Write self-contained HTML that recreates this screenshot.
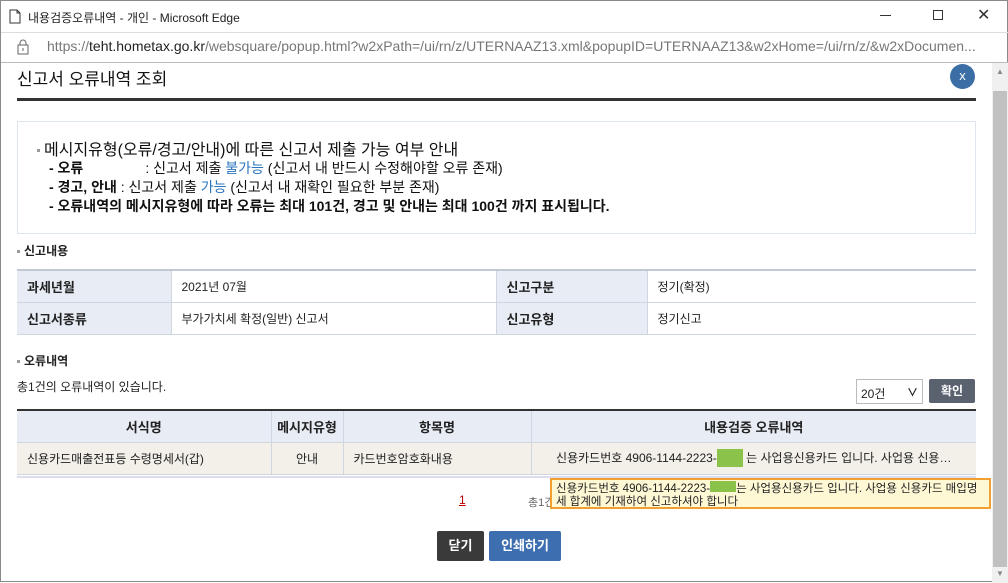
<!DOCTYPE html>
<html><head><meta charset="utf-8"><style>
*{margin:0;padding:0;box-sizing:border-box}
body{width:1008px;height:582px;overflow:hidden;background:#fff;font-family:"Liberation Sans","Noto Sans CJK KR",sans-serif;color:#222;position:relative;border:1px solid #8a8a8a}
.a{position:absolute;white-space:nowrap}
table{border-collapse:collapse;position:absolute;font-size:12px}
td,th{border:1px solid #cfd6e0;height:32px}
.th{background:#e8edf5;font-weight:bold;padding-left:10px;text-align:left;font-size:13px}
.bul{display:inline-block;width:3px;height:3px;background:#999;margin-right:4px;vertical-align:middle}
</style></head><body>
<svg class="a" style="left:8px;top:8px" width="12" height="15"><path d="M1 1h7l3 3v10H1z M8 1v3h3" fill="none" stroke="#333"/></svg>
<div class="a" style="left:27px;top:8px;font-size:12px;color:#222">내용검증오류내역 - 개인 - Microsoft Edge</div>
<div class="a" style="left:879px;top:14px;width:11px;height:1px;background:#333"></div>
<div class="a" style="left:932px;top:9px;width:10px;height:10px;border:1px solid #333"></div>
<div class="a" style="left:976px;top:4px;font-size:16px;color:#333">✕</div>
<div class="a" style="left:0;top:31px;width:1008px;height:1px;background:#ddd"></div>
<svg class="a" style="left:16px;top:38px" width="12" height="16"><rect x="1" y="6" width="10" height="9" fill="none" stroke="#666"/><path d="M3 6V4a3 3 0 0 1 6 0v2" fill="none" stroke="#666"/><rect x="5.5" y="9" width="1" height="3" fill="#666"/></svg>
<div class="a" style="left:46px;top:37px;font-size:14px;color:#777">https://<span style="color:#222">teht.hometax.go.kr</span>/websquare/popup.html?w2xPath=/ui/rn/z/UTERNAAZ13.xml&amp;popupID=UTERNAAZ13&amp;w2xHome=/ui/rn/z/&amp;w2xDocumen...</div>
<div class="a" style="left:0;top:61px;width:1008px;height:1px;background:#bbb"></div>
<div class="a" style="left:991px;top:62px;width:16px;height:520px;background:#f0f0f0"></div>
<div class="a" style="left:992px;top:90px;width:14px;height:476px;background:#c1c1c1"></div>
<div class="a" style="left:995px;top:66px;font-size:8px;color:#888">▲</div>
<div class="a" style="left:995px;top:568px;font-size:8px;color:#888">▼</div>
<div class="a" style="left:16px;top:64px;font-size:17px;color:#111">신고서 오류내역 조회</div>
<div class="a" style="left:949px;top:63px;width:25px;height:25px;border-radius:50%;background:#3a6ea5;color:#fff;font-size:13px;text-align:center;line-height:24px">x</div>
<div class="a" style="left:16px;top:97px;width:959px;height:3px;background:#333"></div>
<div class="a" style="left:16px;top:120px;width:959px;height:113px;border:1px solid #dde4ee"></div>
<div class="a" style="left:36px;top:135px;font-size:16px;color:#111"><span class="bul"></span>메시지유형(오류/경고/안내)에 따른 신고서 제출 가능 여부 안내</div>
<div class="a" style="left:48px;top:157px;font-size:14px;color:#111"><b>- 오류</b><span style="display:inline-block;width:62px"></span>: 신고서 제출 <span style="color:#2a74c0">불가능</span> (신고서 내 반드시 수정해야할 오류 존재)</div>
<div class="a" style="left:48px;top:176px;font-size:14px;color:#111"><b>- 경고, 안내</b> : 신고서 제출 <span style="color:#2a74c0">가능</span> (신고서 내 재확인 필요한 부분 존재)</div>
<div class="a" style="left:48px;top:195px;font-size:14px;color:#111;font-weight:bold">- 오류내역의 메시지유형에 따라 오류는 최대 101건, 경고 및 안내는 최대 100건 까지 표시됩니다.</div>
<div class="a" style="left:16px;top:241px;font-size:12px;font-weight:bold"><span class="bul"></span>신고내용</div>
<table style="left:16px;top:268px;width:959px;border-top:2px solid #c0c8d4">
<tr><td class="th" style="width:154px;border-left:0">과세년월</td><td style="width:325px;padding-left:10px">2021년 07월</td><td class="th" style="width:151px">신고구분</td><td style="padding-left:10px;border-right:0">정기(확정)</td></tr>
<tr><td class="th" style="border-left:0">신고서종류</td><td style="padding-left:10px">부가가치세 확정(일반) 신고서</td><td class="th">신고유형</td><td style="padding-left:10px;border-right:0">정기신고</td></tr>
</table>
<div class="a" style="left:16px;top:351px;font-size:12px;font-weight:bold"><span class="bul"></span>오류내역</div>
<div class="a" style="left:16px;top:377px;font-size:12px">총1건의 오류내역이 있습니다.</div>
<div class="a" style="left:855px;top:378px;width:67px;height:25px;border:1px solid #bbb;font-size:12px;padding:5px 4px">20건<span style="position:absolute;right:4px;top:4px;font-size:11px;font-weight:bold">∨</span></div>
<div class="a" style="left:928px;top:378px;width:46px;height:24px;background:#5a6270;color:#fff;font-size:12px;font-weight:bold;text-align:center;line-height:24px;border-radius:2px">확인</div>
<table style="left:16px;top:408px;width:959px;border-top:2px solid #333;text-align:center">
<tr style="background:#e8edf5;font-weight:bold;font-size:13px"><td style="width:254px;border-left:0">서식명</td><td style="width:72px">메시지유형</td><td style="width:188px">항목명</td><td style="border-right:0">내용검증 오류내역</td></tr>
<tr style="background:#f3efe9"><td style="text-align:left;padding-left:10px;border-left:0">신용카드매출전표등 수령명세서(갑)</td><td>안내</td><td style="text-align:left;padding-left:10px">카드번호암호화내용</td><td style="border-right:0">신용카드번호 4906-1144-2223-<span style="display:inline-block;width:26px;height:18px;background:#8bc34a;vertical-align:middle"></span> 는 사업용신용카드 입니다. 사업용 신용…</td></tr>
</table>
<div class="a" style="left:16px;top:475px;width:959px;height:2px;background:#dde"></div>
<div class="a" style="left:458px;top:492px;font-size:12px;color:#b00;text-decoration:underline">1</div>
<div class="a" style="left:527px;top:493px;font-size:11px;color:#666">총1건</div>
<div class="a" style="left:549px;top:477px;width:441px;height:31px;background:#fff8d5;border:2px solid #f0a030;font-size:11.5px;line-height:13px;padding:1px 4px;white-space:normal">신용카드번호 4906-1144-2223-<span style="display:inline-block;width:26px;height:11px;background:#8bc34a"></span>는 사업용신용카드 입니다. 사업용 신용카드 매입명세 합계에 기재하여 신고하셔야 합니다</div>
<div class="a" style="left:436px;top:530px;width:47px;height:30px;background:#3a3a3a;color:#fff;font-size:13px;font-weight:bold;text-align:center;line-height:30px;border-radius:2px">닫기</div>
<div class="a" style="left:488px;top:530px;width:72px;height:30px;background:#3d6fb0;color:#fff;font-size:13px;font-weight:bold;text-align:center;line-height:30px;border-radius:2px">인쇄하기</div>
</body></html>
